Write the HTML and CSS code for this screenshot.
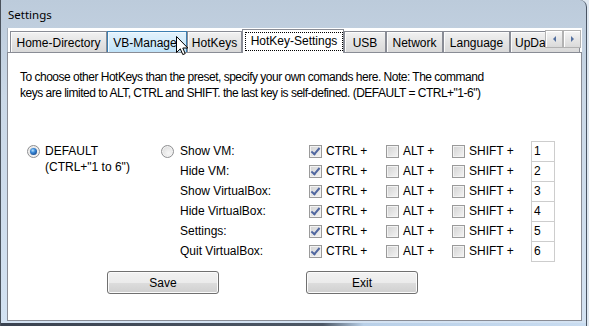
FILE: index.html
```html
<!doctype html>
<html>
    <head>
        <meta charset="utf-8"/>
        <link rel="stylesheet" href="styles.css">
    </head>
    <body>
        <div class="window">
            <div class="titlebar">Settings</div>
            <div class="client">
                <ul class="tabs">
                    <li class="tab">Home-Directory</li>
                    <li class="tab hover">VB-Manage</li>
                    <li class="tab">HotKeys</li>
                    <li class="tab selected"><span class="focus">HotKey-Settings</span></li>
                    <li class="tab">USB</li>
                    <li class="tab">Network</li>
                    <li class="tab">Language</li>
                    <li class="tab">UpDate</li>
                </ul>
                <div class="scroller">
                    <span class="scroll-btn"><i class="arrow left"></i></span>
                    <span class="scroll-btn"><i class="arrow right"></i></span>
                </div>
                <div class="page">
                    <p class="note">To choose other HotKeys than the preset, specify your own comands here. Note: The command<br>keys are limited to ALT, CTRL and SHIFT. the last key is self-defined. (DEFAULT = CTRL+"1-6")</p>
                    <div class="options">
                        <div class="default">
                            <span class="radio on"></span>
                            <span class="label">DEFAULT<br>(CTRL+"1 to 6")</span>
                        </div>
                        <div class="custom">
                            <span class="radio"></span>
                            <div class="grid">
                                <span class="label">Show VM:</span>
                                <span class="check"><span class="box checked"></span>CTRL +</span>
                                <span class="check"><span class="box"></span>ALT +</span>
                                <span class="check"><span class="box"></span>SHIFT +</span>
                                <span class="keybox">1</span>

                                <span class="label">Hide VM:</span>
                                <span class="check"><span class="box checked"></span>CTRL +</span>
                                <span class="check"><span class="box"></span>ALT +</span>
                                <span class="check"><span class="box"></span>SHIFT +</span>
                                <span class="keybox">2</span>

                                <span class="label">Show VirtualBox:</span>
                                <span class="check"><span class="box checked"></span>CTRL +</span>
                                <span class="check"><span class="box"></span>ALT +</span>
                                <span class="check"><span class="box"></span>SHIFT +</span>
                                <span class="keybox">3</span>

                                <span class="label">Hide VirtualBox:</span>
                                <span class="check"><span class="box checked"></span>CTRL +</span>
                                <span class="check"><span class="box"></span>ALT +</span>
                                <span class="check"><span class="box"></span>SHIFT +</span>
                                <span class="keybox">4</span>

                                <span class="label">Settings:</span>
                                <span class="check"><span class="box checked"></span>CTRL +</span>
                                <span class="check"><span class="box"></span>ALT +</span>
                                <span class="check"><span class="box"></span>SHIFT +</span>
                                <span class="keybox">5</span>

                                <span class="label">Quit VirtualBox:</span>
                                <span class="check"><span class="box checked"></span>CTRL +</span>
                                <span class="check"><span class="box"></span>ALT +</span>
                                <span class="check"><span class="box"></span>SHIFT +</span>
                                <span class="keybox">6</span>
                            </div>
                        </div>
                    </div>
                    <div class="buttons">
                        <button class="btn">Save</button>
                        <button class="btn">Exit</button>
                    </div>
                </div>
            </div>
            <svg class="cursor" width="13" height="20" viewBox="0 0 13 20">
                <path d="M0.5 0.5 L0.5 16.5 L4.3 12.8 L6.8 18.6 L9.2 17.6 L6.8 12 L11.8 12 Z" fill="#fff" stroke="#000" stroke-width="1" stroke-linejoin="miter"/>
            </svg>
        </div>
    </body>
</html>
```

FILE: styles.css
```css
* {
	box-sizing: border-box;
}
body {
	margin: 0;
	background: #dfe8f1;
	font-family: "Liberation Sans", Arial, sans-serif;
	font-size: 12px;
	color: #000;
}

/* window frame */
.window {
	position: relative;
	width: 587px;
	height: 326px;
	display: flex;
	flex-direction: column;
	padding: 0 4px 5px 6px;
	border-left: 1px solid #4a525c;
	border-right: 1px solid #4a5564;
	border-top-right-radius: 7px;
	background:
		linear-gradient(to right, #3a4250 0, #4d5866 55%, #b9d0e8 62%, #c9dcf0 100%) bottom / 100% 3px no-repeat,
		linear-gradient(to bottom, #bccbdb 0, #cad8e7 30%, #d3e2f2 100%);
}
.titlebar {
	height: 28px;
	padding: 7px 0 0 1px;
	font-family: "Noto Sans", "Open Sans", sans-serif;
	font-size: 11.5px;
	line-height: 16px;
	color: #000;
}
.client {
	position: relative;
	flex: 1;
	display: flex;
	flex-direction: column;
	background: #fff;
	overflow: hidden;
}

/* tabs */
.tabs {
	list-style: none;
	margin: 0;
	padding: 0 0 0 2px;
	height: 24px;
	display: flex;
	align-items: flex-end;
	border-left: 1px solid #a7b1bd;
	white-space: nowrap;
}
.tab {
	flex: none;
	height: 21px;
	padding-top: 2px;
	line-height: 18px;
	text-align: center;
	border: 1px solid #898c95;
	border-bottom: none;
	background: linear-gradient(#f2f2f2, #e4e4e4 50%, #d9d9d9);
	box-shadow: inset 1px 1px 0 #fbfbfb;
}
.tab:nth-child(1) { width: 97px; }
.tab:nth-child(2) { width: 80px; padding-right: 4px; }
.tab:nth-child(3) { width: 55px; }
.tab:nth-child(4) { width: 102px; }
.tab:nth-child(5) { width: 42px; }
.tab:nth-child(6) { width: 57px; }
.tab:nth-child(7) { width: 67px; }
.tab:nth-child(8) {
	width: 70px;
	padding-left: 4px;
	text-align: left;
}
.tab.hover {
	border-color: #3c7fb1;
	background: linear-gradient(#e4f3fc, #d2ebfb 50%, #bfe2f8);
	box-shadow: inset 1px 1px 0 #f2faff;
}
.tab.selected {
	position: relative;
	z-index: 1;
	height: 24px;
	margin-bottom: -1px;
	padding: 2px 0 0 2px;
	background: #fff;
	box-shadow: none;
}
.focus {
	display: block;
	line-height: 17px;
	border: 1px dotted #000;
}
.scroller {
	position: absolute;
	top: 2px;
	right: 1px;
	display: flex;
	background: #fff;
}
.scroll-btn {
	width: 18px;
	height: 18px;
	display: flex;
	align-items: center;
	justify-content: center;
	border: 1px solid #b2b2b2;
	background: linear-gradient(#f6f6f6, #e7e7e7 50%, #dadada);
	box-shadow: inset 1px 1px 0 #fff;
}
.arrow {
	width: 0;
	height: 0;
	border-top: 3px solid transparent;
	border-bottom: 3px solid transparent;
}
.arrow.left {
	border-right: 3px solid #5470a0;
}
.arrow.right {
	border-left: 3px solid #5470a0;
}

/* page */
.page {
	flex: 1;
	border: 1px solid #898c95;
	padding: 16px 0 0 12px;
}
.note {
	margin: 0;
	line-height: 16px;
	letter-spacing: -0.5px;
	white-space: nowrap;
}
.options {
	display: flex;
	margin-top: 40px;
	padding-left: 7px;
}
.default {
	display: flex;
	gap: 5px;
	width: 134px;
	padding-top: 2px;
	line-height: 16px;
}
.default .radio {
	margin-top: 2px;
}
.custom {
	display: flex;
	gap: 6px;
}
.custom .radio {
	margin-top: 4px;
}
.radio {
	flex: none;
	width: 13px;
	height: 13px;
	border-radius: 50%;
	border: 1px solid #8f9092;
	background: radial-gradient(circle at 60% 65%, #f7f7f7, #d6d6d6);
	box-shadow: inset 0 0 0 1px #f3f3f3;
	display: flex;
	align-items: center;
	justify-content: center;
}
.radio.on::after {
	content: "";
	width: 7px;
	height: 7px;
	border-radius: 50%;
	background: radial-gradient(circle at 40% 35%, #b9e4ff 0, #3b8ad8 35%, #1a4f97 75%, #123a74 100%);
}
.grid {
	display: grid;
	grid-template-columns: 129px 77px 66px 79px 24px;
	grid-auto-rows: 20px;
	line-height: 20px;
}
.check {
	display: flex;
	align-items: center;
	gap: 4px;
}
.box {
	flex: none;
	width: 13px;
	height: 13px;
	border: 1px solid #9a9a9a;
	background: linear-gradient(135deg, #d2d2d2, #f4f4f4);
	box-shadow: inset 0 0 0 1px #f2f2f2;
	display: flex;
	align-items: center;
	justify-content: center;
}
.box.checked::after {
	content: "";
	width: 3px;
	height: 7px;
	margin-top: -2px;
	border-right: 2px solid #5067a0;
	border-bottom: 2px solid #5067a0;
	transform: rotate(40deg);
}
.keybox {
	height: 21px;
	border: 1px solid #cdcdcd;
	padding-left: 2px;
	line-height: 19px;
	background: #fff;
}
.buttons {
	display: flex;
	gap: 87px;
	margin-top: 10px;
	padding-left: 87px;
}
.btn {
	width: 112px;
	height: 23px;
	padding: 0;
	font: inherit;
	color: #000;
	border: 1px solid #707070;
	border-radius: 3px;
	background: linear-gradient(#f2f2f2, #ebebeb 50%, #dddddd 51%, #cfcfcf);
	box-shadow: inset 0 0 0 1px #fbfbfb;
}

/* mouse pointer over the tab strip */
.cursor {
	position: absolute;
	left: 175px;
	top: 36px;
}
```
